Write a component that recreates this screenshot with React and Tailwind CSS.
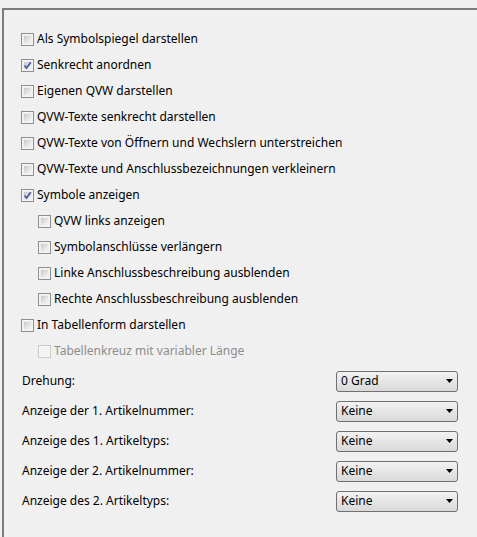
import React from 'react';

const checks = [
  { label: 'Als Symbolspiegel darstellen' },
  { label: 'Senkrecht anordnen', checked: true },
  { label: 'Eigenen QVW darstellen' },
  { label: 'QVW-Texte senkrecht darstellen' },
  { label: 'QVW-Texte von Öffnern und Wechslern unterstreichen' },
  { label: 'QVW-Texte und Anschlussbezeichnungen verkleinern' },
  { label: 'Symbole anzeigen', checked: true },
  { label: 'QVW links anzeigen', indent: true },
  { label: 'Symbolanschlüsse verlängern', indent: true },
  { label: 'Linke Anschlussbeschreibung ausblenden', indent: true },
  { label: 'Rechte Anschlussbeschreibung ausblenden', indent: true },
  { label: 'In Tabellenform darstellen' },
  { label: 'Tabellenkreuz mit variabler Länge', indent: true, disabled: true },
];

const selects = [
  ['Drehung:', '0 Grad'],
  ['Anzeige der 1. Artikelnummer:', 'Keine'],
  ['Anzeige des 1. Artikeltyps:', 'Keine'],
  ['Anzeige der 2. Artikelnummer:', 'Keine'],
  ['Anzeige des 2. Artikeltyps:', 'Keine'],
];

const Box = ({ checked, disabled }) => (
  <span
    className={`relative w-[13px] h-[13px] shrink-0 border ${
      disabled ? 'border-[#c9c9c9] bg-[#f7f7f7]' : 'border-[#8e8f8f] bg-[#f4f4f4]'
    }`}
  >
    <span
      className={`absolute inset-[1px] ${
        disabled
          ? 'bg-[#f4f4f4]'
          : 'bg-gradient-to-br from-[#c9c9c9] to-[#f7f7f7] border border-[#efefef]'
      }`}
    />
    {checked && (
      <svg className="absolute inset-0" width="11" height="11" viewBox="0 0 11 11">
        <path d="M2.5 5.5 L4.5 8 L8.8 2.2" fill="none" stroke="#4c61a0" strokeWidth="1.9" />
      </svg>
    )}
  </span>
);

export default function App() {
  return (
    <div
      className="w-[477px] h-[537px] bg-[#f0f0f0] pt-2 pl-[2px] overflow-hidden text-[12px] text-black"
      style={{ fontFamily: '"Noto Sans", sans-serif' }}
    >
      <div className="h-full border-t-2 border-l-2 border-[#7d7d7d] pl-[17px] pt-4">
        {checks.map((c) => (
          <div key={c.label} className={`h-[26px] flex items-center gap-[3px] ${c.indent ? 'pl-[17px]' : ''}`}>
            <Box checked={c.checked} disabled={c.disabled} />
            <span className={`leading-none ${c.disabled ? 'text-[#8d8d8d]' : ''}`}>{c.label}</span>
          </div>
        ))}
        <div className="mt-[2px]">
          {selects.map(([label, value]) => (
            <div key={label} className="h-[30px] flex items-center">
              <span className="w-[315px] pl-[1px] leading-none">{label}</span>
              <div className="w-[122px] h-[21px] rounded-[3px] border border-[#707070] bg-gradient-to-b from-[#f2f2f2] to-[#d9d9d9] flex items-center justify-between pl-[4px] pr-[4px]">
                <span className="leading-none">{value}</span>
                <svg width="7" height="4" viewBox="0 0 7 4">
                  <path d="M0 0 H7 L3.5 4 Z" fill="#000" />
                </svg>
              </div>
            </div>
          ))}
        </div>
      </div>
    </div>
  );
}
